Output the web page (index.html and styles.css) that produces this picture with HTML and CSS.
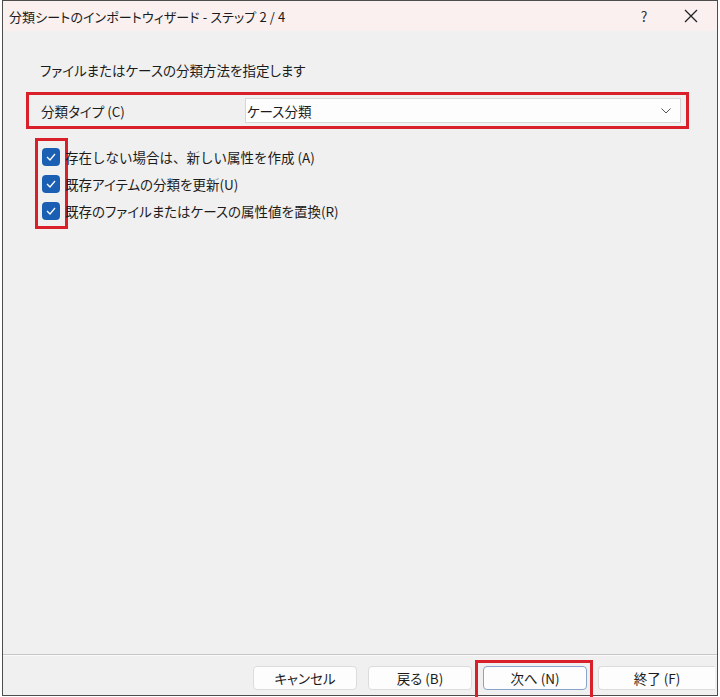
FILE: index.html
```html
<!DOCTYPE html>
<html lang="ja">
<head>
<meta charset="utf-8">
<link rel="stylesheet" href="styles.css">
</head>
<body>
<div class="window">
  <div class="titlebar">
    <span class="title">分類シートのインポートウィザード - ステップ 2 / 4</span>
    <span class="help">?</span>
    <span class="close"><svg width="14" height="14" viewBox="0 0 14 14"><path d="M1 1 L13 13 M13 1 L1 13" stroke="#222" stroke-width="1.3" fill="none"/></svg></span>
  </div>
  <div class="content">
    <p class="intro">ファイルまたはケースの分類方法を指定します</p>
    <div class="typerow">
      <span class="typelabel">分類タイプ (C)</span>
      <div class="combo">
        <span>ケース分類</span>
        <svg width="10" height="6" viewBox="0 0 10 6"><path d="M0.5 0.5 L5 5 L9.5 0.5" stroke="#555" stroke-width="1" fill="none"/></svg>
      </div>
    </div>
    <div class="checks">
      <div class="annot-checks"></div>
      <label class="check"><span class="box"><svg width="10" height="8" viewBox="0 0 10 8"><path d="M1 4 L4 7 L9 1" stroke="#fff" stroke-width="1.3" fill="none"/></svg></span><span class="wide">存在しない場合は、新しい属性を作成 (A)</span></label>
      <label class="check"><span class="box"><svg width="10" height="8" viewBox="0 0 10 8"><path d="M1 4 L4 7 L9 1" stroke="#fff" stroke-width="1.3" fill="none"/></svg></span><span>既存アイテムの分類を更新(U)</span></label>
      <label class="check"><span class="box"><svg width="10" height="8" viewBox="0 0 10 8"><path d="M1 4 L4 7 L9 1" stroke="#fff" stroke-width="1.3" fill="none"/></svg></span><span>既存のファイルまたはケースの属性値を置換(R)</span></label>
    </div>
  </div>
  <div class="footer">
    <button class="btn">キャンセル</button>
    <button class="btn">戻る (B)</button>
    <button class="btn primary">次へ (N)<span class="annot-btn"></span></button>
    <button class="btn last">終了 (F)</button>
  </div>
</div>
</body>
</html>
```
FILE: styles.css
```css
* { box-sizing: border-box; }
html, body { margin: 0; padding: 0; background: #fff; }
body {
  font-family: "Noto Sans CJK JP", "Noto Sans", sans-serif;
  font-feature-settings: "palt";
  color: #1b1b1b;
  width: 720px;
  height: 697px;
  overflow: hidden;
}
.window {
  margin-left: 2px;
  width: 716px;
  height: 696px;
  border: 1px solid #4d4d4d;
  display: flex;
  flex-direction: column;
  background: #f0f0f0;
}
.titlebar {
  height: 30px;
  background: #f9f0ef;
  display: flex;
  align-items: center;
  padding-left: 6px;
  font-size: 13px;
}
.title { flex: 1; letter-spacing: 0.1px; }
.help { width: 30px; text-align: center; margin-right: 22px; font-size: 14px; color: #333; }
.close { width: 20px; display: flex; justify-content: center; margin-right: 16px; }
.content {
  flex: 1;
  position: relative;
  padding: 29px 0 0 23px;
}
.intro {
  margin: 0 0 0 14px;
  font-size: 13.5px;
  line-height: 20px;
}
.typerow {
  margin-top: 12px;
  width: 663px;
  height: 37px;
  border: 3px solid #d91f2a;
  display: flex;
  align-items: center;
  padding-left: 12px;
  font-size: 13.5px;
}
.typelabel { width: 204px; }
.combo {
  width: 436px;
  height: 25px;
  background: #fdfdfd;
  border: 1px solid #d6d6d6;
  display: flex;
  align-items: center;
  justify-content: space-between;
  padding: 0 9px 0 1px;
}
.checks {
  position: relative;
  margin-top: 19px;
  display: flex;
  flex-direction: column;
  gap: 9px;
  padding-left: 16px;
}
.check {
  display: flex;
  align-items: center;
  height: 18px;
  font-size: 13.5px;
  position: relative;
  z-index: 1;
}
.wide { font-feature-settings: normal; }
.box {
  width: 18px;
  height: 18px;
  border-radius: 4px;
  background: #1a5fb4;
  display: flex;
  align-items: center;
  justify-content: center;
  margin-right: 5px;
}
.annot-checks {
  position: absolute;
  left: 9px;
  top: -10px;
  width: 33px;
  height: 91px;
  border: 3px solid #d91f2a;
}
.footer {
  height: 41px;
  border-top: 1px solid #c6c6c6;
  box-shadow: inset 0 1px 0 #fafafa;
  display: flex;
  align-items: center;
  padding-left: 250px;
  gap: 11px;
}
.btn {
  position: relative;
  font-family: inherit;
  font-feature-settings: "palt";
  font-size: 13.5px;
  color: #1b1b1b;
  width: 104px;
  height: 24px;
  background: #fdfdfd;
  border: 1px solid #dcdcdc;
  border-radius: 4px;
  padding: 0;
  margin-top: 6px;
}
.btn.primary { border-color: #8aa3c8; }
.btn.last { width: 117px; border-right: none; border-radius: 4px 0 0 4px; }
.annot-btn {
  position: absolute;
  left: -9px;
  top: -7px;
  width: 118px;
  height: 45px;
  border: 3px solid #d91f2a;
}
```
